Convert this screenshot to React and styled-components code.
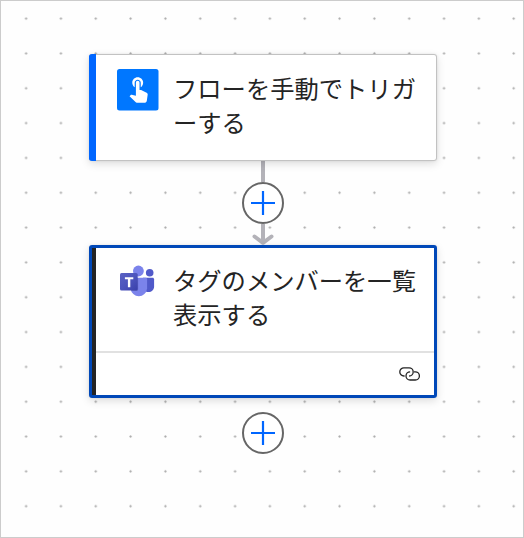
import React from 'react';
import styled, { createGlobalStyle } from 'styled-components';

const GlobalStyle = createGlobalStyle`
  * {
    box-sizing: border-box;
  }

  body {
    margin: 0;
    background: #ffffff;
    font-family: 'Noto Sans CJK JP', 'Noto Sans', sans-serif;
  }
`;

const Canvas = styled.main`
  width: 524px;
  height: 538px;
  padding: 53px 0 0 88px;
  border: 1px solid #cccccc;
  background-color: #fefefe;
  background-image: radial-gradient(circle, #aaaaaa 0.7px, transparent 1.5px);
  background-size: 34.83px 34.83px;
  background-position: 7.7px 0.2px;
  overflow: hidden;
`;

const Flow = styled.div`
  width: 348px;
  display: flex;
  flex-direction: column;
  align-items: center;
`;

const Card = styled.section`
  width: 100%;
  height: ${props => (props.$selected ? '153px' : '107px')};
  display: flex;
  flex-direction: column;
  background: linear-gradient(to right, ${props => props.$accent} ${props => (props.$selected ? '4px' : '7px')}, #ffffff 0);
  background-origin: ${props => (props.$selected ? 'padding-box' : 'border-box')};
  background-clip: border-box;
  border: ${props => (props.$selected ? '3px solid #0048b8' : '1px solid #c2c2c2')};
  border-width: ${props => (props.$selected ? '3px' : '1.5px 1.5px 1px 0')};
  padding-left: ${props => (props.$selected ? '4px' : '7px')};
  border-radius: 3px;
  box-shadow: 0 3px 8px rgba(0, 0, 0, 0.13), 0 0 3px rgba(0, 0, 0, 0.08);
  position: relative;
`;

/* coloured strip on the left edge, drawn over the card border */
const Accent = styled.div`
  position: absolute;
  left: 0;
  top: -1px;
  bottom: -1px;
  width: 7px;
  border-radius: 3px 0 0 3px;
  background: #0066ff;
`;

const CardHeader = styled.div`
  flex: 1;
  display: flex;
  align-items: flex-start;
  gap: 14px;
  padding: ${props => (props.$selected ? '12px' : '14px')} 0 0 21px;
`;

const CardIcon = styled.svg`
  width: 42px;
  height: 42px;
  flex: none;
`;

const CardTitle = styled.h2`
  margin: ${props => (props.$selected ? '3px' : '2px')} 0 0;
  font-size: 24.3px;
  font-weight: 400;
  line-height: 34.4px;
  color: #242424;
  white-space: nowrap;
`;

const CardFooter = styled.div`
  height: 44px;
  display: flex;
  align-items: center;
  justify-content: flex-end;
  padding: 0 13px 1px 0;
  border-top: 2px solid #e1e1e1;
`;

const Connector = styled.div`
  display: flex;
  flex-direction: column;
  align-items: center;
`;

const Line = styled.div`
  width: 4px;
  height: 21px;
  background: #b3b2b8;
`;

const AddButton = styled.button`
  width: 42px;
  height: 42px;
  margin-top: ${props => props.$gap || '0'};
  padding: 0;
  display: flex;
  align-items: center;
  justify-content: center;
  background: #ffffff;
  border: 2px solid #666666;
  border-radius: 50%;
`;

const Arrow = styled.svg`
  display: block;
`;

const PlusIcon = () => (
  <svg width="24" height="24" viewBox="0 0 24 24" fill="none" stroke="#0066ff" strokeWidth="2.2">
    <path d="M12 0v24M0 12h24" />
  </svg>
);

const TouchIcon = () => (
  <CardIcon viewBox="0 0 42 42">
    <rect x="0" y="0" width="41.5" height="41.5" rx="2.5" fill="#0077ff" />
    <path
      transform="translate(6.8 4.6) scale(1.21)"
      fill="#ffffff"
      d="M9 11.24V7.5C9 6.12 10.12 5 11.5 5S14 6.12 14 7.5v3.74c1.21-.81 2-2.18 2-3.74C16 5.01 13.99 3 11.5 3S7 5.01 7 7.5c0 1.56.79 2.93 2 3.74zm9.84 4.63-4.54-2.26c-.17-.07-.35-.11-.54-.11H13v-6c0-.83-.67-1.5-1.5-1.5S10 6.67 10 7.5v10.74l-3.43-.72c-.08-.01-.15-.03-.24-.03-.31 0-.59.13-.79.33l-.79.8 4.94 4.94c.27.27.65.44 1.06.44h6.79c.75 0 1.33-.55 1.44-1.28l.75-5.27c.01-.07.02-.14.02-.2 0-.62-.38-1.16-.91-1.38z"
    />
  </CardIcon>
);

const TeamsIcon = () => (
  <CardIcon viewBox="0 0 42 42">
    <defs>
      <linearGradient id="tile" x1="0" y1="0" x2="1" y2="1">
        <stop offset="0" stopColor="#5a62c3" />
        <stop offset="0.5" stopColor="#4d55bd" />
        <stop offset="1" stopColor="#3940ab" />
      </linearGradient>
    </defs>
    <circle cx="32.7" cy="12.7" r="3.8" fill="#5059c9" />
    <path d="M26 17.7h9.6c.8 0 1.5.6 1.5 1.5v7.2c0 3.2-2.6 5.7-5.7 5.7S26 29.5 26 26.4z" fill="#5059c9" />
    <circle cx="21.4" cy="11" r="5.4" fill="#7b83eb" />
    <path d="M13.6 17.7h15c.9 0 1.5.7 1.5 1.5v9.2a8.3 8.9 0 0 1-16.5 0z" fill="#7b83eb" />
    <path d="M13.6 17.7h7.6v11.5c0 1-.7 1.7-1.6 1.7h-5.4z" fill="#000000" opacity="0.16" />
    <rect x="3" y="13" width="17.7" height="17.4" rx="1.5" fill="url(#tile)" />
    <path d="M7.9 17.2h8.4v2.1h-3v7.9h-2.4v-7.9h-3z" fill="#ffffff" />
  </CardIcon>
);

const LinkIcon = () => (
  <svg width="22" height="14" viewBox="0 0 22 14" fill="none" stroke="#242424" strokeWidth="1.3">
    <path d="M5.6 9H4.9A4.1 4.1 0 0 1 4.9 .8H10.1A4.1 4.1 0 0 1 10.1 9" />
    <path d="M15 4.8H16.3A4.1 4.1 0 0 1 16.3 13H11.1A4.1 4.1 0 0 1 11.1 4.8" />
  </svg>
);

const App = () => {
  const steps = [
    { id: 'trigger', icon: TouchIcon, lines: ['フローを手動でトリガ', 'ーする'], accent: '#0066ff', selected: false },
    { id: 'teams', icon: TeamsIcon, lines: ['タグのメンバーを一覧', '表示する'], accent: '#242424', selected: true },
  ];

  return (
    <>
      <GlobalStyle />
      <Canvas>
        <Flow>
          {steps.map((step, index) => (
            <React.Fragment key={step.id}>
              {index > 0 && (
                <Connector>
                  <Line />
                  <AddButton aria-label="追加">
                    <PlusIcon />
                  </AddButton>
                  <Arrow width="24" height="21" viewBox="0 0 24 21" fill="none" stroke="#b3b2b8" strokeWidth="4">
                    <path d="M12 0v18" />
                    <path d="M3.5 12.5 12 18.8l8.5-6.3" strokeLinecap="round" strokeLinejoin="round" />
                  </Arrow>
                </Connector>
              )}
              <Card $accent={step.accent} $selected={step.selected}>
                {!step.selected && <Accent />}
                <CardHeader $selected={step.selected}>
                  <step.icon />
                  <CardTitle $selected={step.selected}>
                    {step.lines[0]}
                    <br />
                    {step.lines[1]}
                  </CardTitle>
                </CardHeader>
                {step.selected && (
                  <CardFooter>
                    <LinkIcon />
                  </CardFooter>
                )}
              </Card>
            </React.Fragment>
          ))}
          <AddButton $gap="14px" aria-label="追加">
            <PlusIcon />
          </AddButton>
        </Flow>
      </Canvas>
    </>
  );
};

export default App;
